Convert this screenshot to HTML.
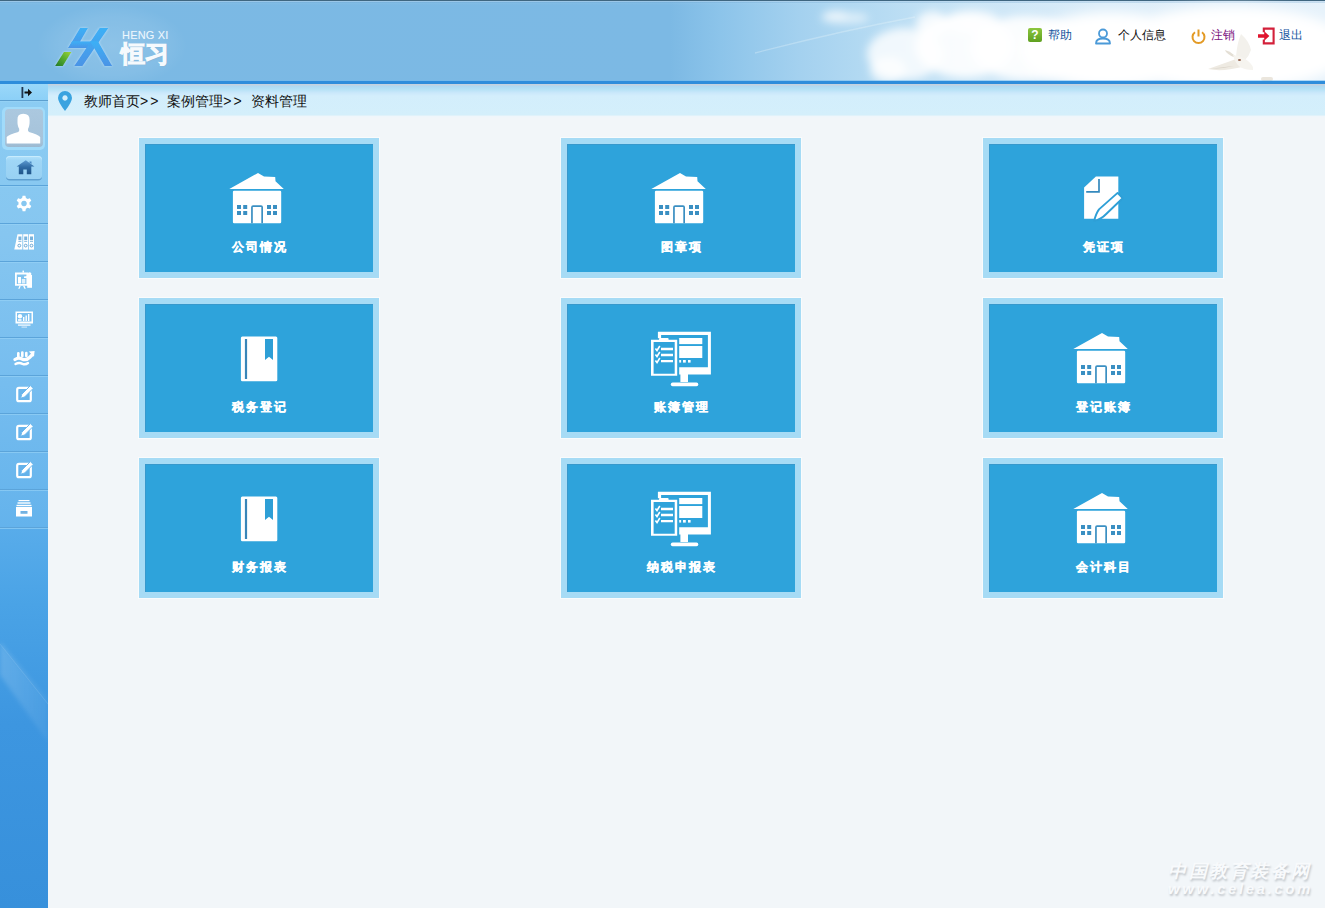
<!DOCTYPE html>
<html><head><meta charset="utf-8">
<style>
*{margin:0;padding:0;box-sizing:border-box}
html,body{width:1325px;height:908px;overflow:hidden;background:#f2f6f9;font-family:"Liberation Sans",sans-serif}
#hdr{position:absolute;left:0;top:0;width:1325px;height:81px;
 background:linear-gradient(90deg,#7bb9e4 0,#7cb9e4 670px,#8cc4ea 720px,#a4d1ef 800px,#b2d9f2 860px,#c8e4f6 960px,#dcedf9 1100px,#e6f2fb 1325px);
 border-top:1px solid #3f6680}
#hdr:before{content:"";position:absolute;left:0;top:0;width:1325px;height:4px;background:linear-gradient(180deg,rgba(180,210,235,.55) 0,rgba(180,210,235,.55) 1px,rgba(120,170,210,.3) 1px,rgba(120,170,210,.3) 2px,rgba(255,255,255,.05) 2px,rgba(255,255,255,0) 4px)}
#hline{position:absolute;left:0;top:81px;width:1325px;height:3px;background:#2e8ddb}
#crumb{position:absolute;left:48px;top:84px;width:1277px;height:34px;
 background:linear-gradient(180deg,#c4d2df 0,#c4d2df 1px,#afd8f1 2px,#b3e1f5 5px,#cbe8fb 9px,#d3eefc 12px,#d4effb 30.5px,#e0f2fa 31.5px,#eff6fb 32.5px,#f2f6f9 34px)}
#crumb .gt{letter-spacing:2px;word-spacing:1px}
#crumb .txt{position:absolute;left:36px;top:9px;font-size:14px;line-height:16px;color:#111;white-space:nowrap}
#side{position:absolute;left:0;top:84px;width:48px;height:824px;
 background:linear-gradient(180deg,#8ccdf3 0,#86c6f0 150px,#76bdef 300px,#64b3ec 443px,#58acea 445px,#4aa3e6 520px,#3d96e0 640px,#3790db 824px)}
.sep{position:absolute;left:0;width:48px;height:1px;background:#5ba4da}
.sep2{position:absolute;left:0;width:48px;height:1px;background:#99d3f6;opacity:.6}
.card{position:absolute;width:240px;height:140px;background:#2ea3db;border:6px solid #a6dbf5;box-shadow:0 0 0 1px rgba(255,255,255,.55),inset 1px 1px 0 #3798cc}
.card .lbl{position:absolute;left:2px;right:0;top:96px;text-align:center;color:#fff;font-weight:bold;font-size:12px;line-height:14px;letter-spacing:2px;-webkit-text-stroke:.35px #fff}
.card svg{position:absolute}
.sico{position:absolute}
#hx{position:absolute;left:122px;top:29px;font:11px/11px "Liberation Sans",sans-serif;color:#eef7fd;letter-spacing:.2px;white-space:nowrap;text-shadow:0 0 1px #9dcbed}
#hxc{position:absolute;left:121px;top:40px;font:bold 24px/26px "Liberation Sans",sans-serif;color:#f6fafd;-webkit-text-stroke:1px #f6fafd;white-space:nowrap;text-shadow:1px 1px 1px #8ab6d6}
.ticon{position:absolute}
#wm1{position:absolute;left:1168px;top:861px;width:144px;font:bold 18px/20px "Liberation Serif",serif;letter-spacing:2.5px;color:#f8fafc;text-shadow:1px 2px 2px #c3c8cd;white-space:nowrap;font-style:italic}
#wm2{position:absolute;left:1168px;top:880px;width:150px;font:bold 15px/17px "Liberation Sans",sans-serif;letter-spacing:2.6px;color:#f8fafc;text-shadow:1px 2px 2px #c3c8cd;white-space:nowrap;font-style:italic}
.tb{position:absolute;top:26px;font-size:12px;line-height:16px;white-space:nowrap}
</style></head><body>
<div id="hdr">
 <svg id="clouds" style="position:absolute;left:0;top:-1px" width="1325" height="81" viewBox="0 0 1325 81">
  <defs><filter id="cb" x="-30%" y="-30%" width="160%" height="160%"><feGaussianBlur stdDeviation="4"/></filter>
  <filter id="cb2" x="-30%" y="-30%" width="160%" height="160%"><feGaussianBlur stdDeviation="6"/></filter></defs>
  <path d="M755,53 Q840,31 915,17" stroke="#eef7fd" stroke-width="1.3" fill="none" opacity=".3"/>
  <g fill="#fff" filter="url(#cb)">
   <ellipse cx="845" cy="18" rx="24" ry="6" opacity=".55"/>
   <ellipse cx="835" cy="15" rx="12" ry="5" opacity=".5"/>
   <ellipse cx="905" cy="54" rx="38" ry="26" opacity=".8"/>
   <ellipse cx="888" cy="70" rx="18" ry="13" opacity=".75"/>
   <ellipse cx="932" cy="24" rx="16" ry="13" opacity=".8"/>
   <ellipse cx="972" cy="22" rx="28" ry="12" opacity=".75"/>
   <ellipse cx="965" cy="46" rx="50" ry="32" opacity=".9"/>
   <ellipse cx="1025" cy="48" rx="55" ry="32" opacity=".9"/>
  </g>
  <g fill="#fff" filter="url(#cb2)">
   <ellipse cx="1110" cy="50" rx="90" ry="38"/>
   <ellipse cx="1230" cy="48" rx="120" ry="42"/>
  </g>
 </svg>
 <svg style="position:absolute;left:0;top:-1px" width="1325" height="81" viewBox="0 0 1325 81">
  <defs><radialGradient id="lglow"><stop offset="0" stop-color="#fff" stop-opacity=".14"/><stop offset=".7" stop-color="#fff" stop-opacity=".07"/><stop offset="1" stop-color="#fff" stop-opacity="0"/></radialGradient>
   <linearGradient id="lg1" x1="0" y1="1" x2="1" y2="0"><stop offset="0" stop-color="#1f7a2a"/><stop offset=".6" stop-color="#5fb22f"/><stop offset="1" stop-color="#9fd23a"/></linearGradient>
   <linearGradient id="lb1" x1="0" y1="0" x2="0" y2="1"><stop offset="0" stop-color="#3db0f6"/><stop offset="1" stop-color="#4a94e6"/></linearGradient>
   <filter id="glow" x="-20%" y="-20%" width="140%" height="140%"><feGaussianBlur stdDeviation="0.8" in="SourceAlpha" result="b"/><feFlood flood-color="#c8ecff" flood-opacity=".8"/><feComposite in2="b" operator="in"/><feMerge><feMergeNode/><feMergeNode in="SourceGraphic"/></feMerge></filter>
  </defs>
  <ellipse cx="112" cy="46" rx="75" ry="42" fill="url(#lglow)"/>
  <g filter="url(#glow)">
   <path d="M55,66 L62.9,66 L71.5,52 L63.8,52 Z" fill="url(#lg1)"/>
   <path d="M80,28 L88,28 L76.5,47.9 L68.2,47.9 Z" fill="url(#lb1)"/>
   <path d="M72,41.3 L96,41.3 L92,47.9 L68.2,47.9 Z" fill="url(#lb1)"/>
   <path d="M99.6,28 L108.4,28 L82.5,66 L74.2,66 Z" fill="url(#lb1)"/>
   <path d="M90,41.3 L98,41.3 L112.2,66 L104.5,66 Z" fill="url(#lb1)"/>
  </g>
  
 </svg>
 <div id="hx">HENG XI</div>
 <div id="hxc">恒习</div>
 <svg id="dove" style="position:absolute;left:1200px;top:28px" width="60" height="56" viewBox="0 0 60 56">
  <defs><filter id="db"><feGaussianBlur stdDeviation=".7"/></filter></defs>
  <g filter="url(#db)">
  <path d="M36,28 Q37,14 41,5 Q49,12 51,21 Q49,27 45,31 Z" fill="#f3f1ec"/>
  <path d="M39,29 Q25,34 8,40 Q22,43 42,38 Z" fill="#eeeae2"/>
  <path d="M25,21 Q30,22 34,26 L37,29 Q31,28 26,23 Z" fill="#e4dfd5"/>
  <path d="M33,26 Q42,27 48,32 Q54,37 53,41 Q45,41 40,38 Q35,34 33,26 Z" fill="#f6f4ef"/>
  <path d="M10,40 Q22,40 34,37 Q24,38 10,40 Z" fill="#d9d3c8"/>
  <ellipse cx="39.5" cy="31" rx="1.6" ry="1" fill="#9a6a55"/>
  </g>
 </svg>
 <div style="position:absolute;left:1261px;top:76px;width:12px;height:4px;background:#ebe6dd;border-radius:2px"></div>
 <div class="ticon" style="left:1028px;top:27px;width:14px;height:14px;background:linear-gradient(#8cc63f,#5fa020);border-radius:2px;color:#fff;font:bold 12px/14px 'Liberation Sans',sans-serif;text-align:center">?</div>
 <div class="tb" style="left:1048px;color:#14549e">帮助</div>
 <svg class="ticon" style="left:1094px;top:27px" width="18" height="17" viewBox="0 0 18 17"><circle cx="9" cy="5.5" r="4" fill="none" stroke="#4b9ad8" stroke-width="1.8"/><path d="M2,15.5 Q2,10.5 9,10.5 Q16,10.5 16,15.5 Z" fill="none" stroke="#4b9ad8" stroke-width="1.8" stroke-linejoin="round"/></svg>
 <div class="tb" style="left:1118px;color:#111">个人信息</div>
 <svg class="ticon" style="left:1190px;top:27px" width="17" height="17" viewBox="0 0 17 17"><path d="M5,4.2 A6,6 0 1 0 12,4.2" fill="none" stroke="#e39a24" stroke-width="2"/><path d="M8.5,1.5 V8.5" stroke="#e39a24" stroke-width="2"/></svg>
 <div class="tb" style="left:1211px;color:#7c1380">注销</div>
 <svg class="ticon" style="left:1257px;top:26px" width="18" height="18" viewBox="0 0 18 18"><path d="M6.8,5.2 V1.6 H16.6 V16.4 H6.8 V12.6" fill="none" stroke="#d3203a" stroke-width="2.1"/><path d="M1,7.3 H7.2 V4.2 L12.4,9 L7.2,13.8 V10.7 H1 Z" fill="#e0142e"/></svg>
 <div class="tb" style="left:1279px;color:#14549e">退出</div>
</div>
<div id="hline"></div><div style="position:absolute;left:0;top:80px;width:1325px;height:1px;background:rgba(110,185,240,.5)"></div>
<div id="side"></div>
<div style="position:absolute;left:0;top:84px;width:48px;height:16px;background:linear-gradient(#9ad8f9,#8cd0f7)"></div>
<div class="sep" style="top:100px;background:#5b9fcf"></div><div class="sep2" style="top:101px"></div>
<svg class="sico" style="left:20px;top:86px" width="14" height="13" viewBox="0 0 14 13"><rect x="1.5" y="1" width="1.8" height="11" fill="#1d3550"/><path d="M4.5,5.4 H8 V2.8 L12,6.5 L8,10.2 V7.6 H4.5 Z" fill="#111"/></svg>
<div style="position:absolute;left:2px;top:107px;width:43px;height:43px;border-radius:5px;background:#a1dbfa"></div>
<div style="position:absolute;left:4.5px;top:109px;width:38px;height:38px;border-radius:4px;background:linear-gradient(#abc8df,#a6c3da 85%,#9cb9d0)"></div>
<svg class="sico" style="left:0;top:100px" width="48" height="50" viewBox="0 0 48 50"><path d="M17.5,20 Q17,13.8 23.3,13.8 Q29.8,13.8 29.6,20 Q29.8,26 28,29 Q27.6,31 29,32 Q38,34.5 40.2,37 V43.6 H6.7 V37 Q9,34.5 18.3,32 Q19.6,31 19.2,29 Q17.2,26 17.5,20 Z" fill="#fff"/></svg>
<div style="position:absolute;left:5.5px;top:155.5px;width:36.5px;height:23px;border-radius:4px;background:linear-gradient(#b4e2fb,#9fd6f6 20%,#98d1f3);box-shadow:0 1.5px 0 #5e9fd0, inset 0 1px 0 #c8ecfd"></div>
<svg class="sico" style="left:0;top:150px" width="48" height="30" viewBox="0 0 48 30"><defs><linearGradient id="hg" x1="0" y1="0" x2="0" y2="1"><stop offset="0" stop-color="#5d9ad0"/><stop offset=".5" stop-color="#2f6ba4"/><stop offset="1" stop-color="#1f5488"/></linearGradient></defs><path d="M25.8,10.3 L34.4,16.5 H31.3 V24.2 H26.8 V19.5 H23.3 V24.2 H18.8 V16.5 H16.6 Z" fill="url(#hg)"/><path d="M29.5,11.5 H31.5 V14 L29.5,12.7 Z" fill="#4d8ac4"/></svg>
<div class="sep" style="top:185px"></div><div class="sep2" style="top:186px"></div><div class="sep" style="top:223px"></div><div class="sep2" style="top:224px"></div><div class="sep" style="top:261px"></div><div class="sep2" style="top:262px"></div><div class="sep" style="top:299px"></div><div class="sep2" style="top:300px"></div><div class="sep" style="top:337px"></div><div class="sep2" style="top:338px"></div><div class="sep" style="top:375px"></div><div class="sep2" style="top:376px"></div><div class="sep" style="top:413px"></div><div class="sep2" style="top:414px"></div><div class="sep" style="top:451px"></div><div class="sep2" style="top:452px"></div><div class="sep" style="top:489px"></div><div class="sep2" style="top:490px"></div><div class="sep" style="top:527px"></div><div class="sep2" style="top:528px"></div>
<!-- sidebar icons -->
<svg class="sico" style="left:15px;top:195px" width="18" height="18" viewBox="0 0 18 18"><path fill="#fff" fill-rule="evenodd" d="M7.6,0.8 H10.4 L10.9,3.1 L12.7,4.1 L14.9,3.3 L16.3,5.7 L14.5,7.3 V9.5 L16.3,11.1 L14.9,13.5 L12.7,12.7 L10.9,13.8 L10.4,16.2 H7.6 L7.1,13.8 L5.3,12.7 L3.1,13.5 L1.7,11.1 L3.5,9.5 V7.3 L1.7,5.7 L3.1,3.3 L5.3,4.1 L7.1,3.1 Z M9,5.7 A2.8,2.8 0 1 0 9.01,5.7 Z"/></svg>
<svg class="sico" style="left:14px;top:233px" width="21" height="18" viewBox="0 0 21 18"><g fill="#fff"><path d="M3.5,1.2 H8.3 V16.6 H0.3 Z"/><rect x="9.2" y="1.2" width="5" height="15.4"/><rect x="15" y="1.2" width="5" height="15.4"/></g><g fill="#7ab3dc"><rect x="4.4" y="3.5" width="3" height="3.5"/><rect x="10.2" y="3.5" width="3" height="3.5"/><rect x="16" y="3.5" width="3" height="3.5"/><rect x="4.4" y="7.8" width="3" height="1"/><rect x="10.2" y="7.8" width="3" height="1"/><rect x="16" y="7.8" width="3" height="1"/></g><g fill="none" stroke="#6aa6d4" stroke-width="1"><circle cx="5.3" cy="12.6" r="1.4"/><circle cx="11.7" cy="12.6" r="1.4"/><circle cx="17.5" cy="12.6" r="1.4"/></g></svg>
<svg class="sico" style="left:14px;top:270px" width="20" height="20" viewBox="0 0 20 20"><g fill="#fff"><rect x="8.5" y="0.6" width="1.5" height="2"/><path fill-rule="evenodd" d="M1,2.6 H14.2 V15.8 H1 Z M2.8,4.4 V14 H12.4 V4.4 Z"/><rect x="4" y="7" width="3" height="6.5"/><rect x="7.8" y="9" width="3.5" height="4.5" opacity=".75"/><rect x="13.2" y="5" width="4.8" height="12.8"/><circle cx="15.6" cy="4" r="1.8"/><path d="M10,6.5 L13.5,6 V8 L10,8 Z"/><path d="M5.5,15.8 L4.2,18.8 H5.6 L6.8,15.8 Z M9,15.8 L10.4,18.8 H11.8 L10.5,15.8 Z"/></g></svg>
<svg class="sico" style="left:15px;top:310px" width="19" height="18" viewBox="0 0 19 18"><g fill="#fff"><path fill-rule="evenodd" d="M0.5,1.5 H18 V13.5 H0.5 Z M2,3 V11.5 H16.5 V3 Z"/><rect x="3" y="14.5" width="12.5" height="1.2"/><rect x="6.5" y="16.5" width="5.5" height="1.2" opacity=".6"/><circle cx="5" cy="6.2" r="2.2"/><rect x="8" y="7" width="1.4" height="4"/><rect x="10.5" y="5.5" width="1.4" height="5.5"/><rect x="13" y="4" width="1.4" height="7"/><rect x="3" y="9" width="3.5" height="2" opacity=".8"/></g></svg>
<svg class="sico" style="left:13px;top:349px" width="23" height="18" viewBox="0 0 23 18"><g fill="#fff"><rect x="4" y="3" width="2.6" height="5.5" rx="1.2"/><rect x="8" y="2.2" width="2.6" height="6" rx="1.2"/><rect x="12" y="2.8" width="2.6" height="5.5" rx="1.2"/><path d="M15.8,2.6 L21.6,2 L21,7.8 Z"/></g><g fill="none" stroke="#fff" stroke-linecap="round"><path d="M2,10.5 Q5.5,8 9,10 Q13,12 16.5,8.5 L19,6" stroke-width="3.2"/><path d="M2.5,15 Q6,13.2 9.5,14.8 Q12.5,16 15,14" stroke-width="2.4"/></g></svg>
<svg class="sico" style="left:15px;top:385px" width="19" height="18" viewBox="0 0 19 18"><rect x="2.2" y="2.8" width="13.6" height="13.4" rx="1.8" fill="#5aa9e6" fill-opacity=".35" stroke="#fff" stroke-width="2.2"/><path d="M15.4,0.6 L18.2,3.4 L9.6,12 L5.6,13.2 L6.8,9.2 Z" fill="#fff" stroke="#6cb8ee" stroke-width="1"/></svg>
<svg class="sico" style="left:15px;top:423px" width="19" height="18" viewBox="0 0 19 18"><rect x="2.2" y="2.8" width="13.6" height="13.4" rx="1.8" fill="#5aa9e6" fill-opacity=".35" stroke="#fff" stroke-width="2.2"/><path d="M15.4,0.6 L18.2,3.4 L9.6,12 L5.6,13.2 L6.8,9.2 Z" fill="#fff" stroke="#6cb8ee" stroke-width="1"/></svg>
<svg class="sico" style="left:15px;top:461px" width="19" height="18" viewBox="0 0 19 18"><rect x="2.2" y="2.8" width="13.6" height="13.4" rx="1.8" fill="#5aa9e6" fill-opacity=".35" stroke="#fff" stroke-width="2.2"/><path d="M15.4,0.6 L18.2,3.4 L9.6,12 L5.6,13.2 L6.8,9.2 Z" fill="#fff" stroke="#6cb8ee" stroke-width="1"/></svg>
<svg class="sico" style="left:15px;top:499px" width="18" height="19" viewBox="0 0 18 19"><g fill="#fff"><rect x="3.5" y="1" width="11" height="1.2"/><rect x="2.5" y="3.3" width="13" height="1.4"/><rect x="1.5" y="5.8" width="15" height="1.4"/><path fill-rule="evenodd" d="M1,8 H17 V17.5 H1 Z M5.5,12 V14.8 H12.5 V12 Z"/></g><rect x="6.3" y="12.7" width="5.4" height="1.4" fill="#7fb0d6"/></svg>

<div id="crumb"><svg style="position:absolute;left:9px;top:6px" width="16" height="22" viewBox="0 0 16 22"><path fill="#3aa3e0" fill-rule="evenodd" d="M8,1 A7,7 0 0 1 15,8 Q15,12 8,21 Q1,12 1,8 A7,7 0 0 1 8,1 Z M8,5.3 A2.7,2.7 0 1 0 8.01,5.3 Z"/></svg><div class="txt">教师首页<span class="gt">&gt;&gt; </span>案例管理<span class="gt">&gt;&gt; </span>资料管理</div></div>

<!-- cards -->
<div class="card" style="left:139px;top:138px">
 <svg style="left:79px;top:24px" width="68" height="60" viewBox="0 0 68 60"><use href="#house"/></svg>
 <div class="lbl">公司情况</div></div>
<div class="card" style="left:561px;top:138px">
 <svg style="left:79px;top:24px" width="68" height="60" viewBox="0 0 68 60"><use href="#house"/></svg>
 <div class="lbl">图章项</div></div>
<div class="card" style="left:983px;top:138px">
 <svg style="left:86px;top:26px" width="55" height="55" viewBox="0 0 55 55"><use href="#doc"/></svg>
 <div class="lbl">凭证项</div></div>
<div class="card" style="left:139px;top:298px">
 <svg style="left:85px;top:26px" width="60" height="60" viewBox="0 0 60 60"><use href="#book"/></svg>
 <div class="lbl">税务登记</div></div>
<div class="card" style="left:561px;top:298px">
 <svg style="left:78px;top:21px" width="75" height="65" viewBox="0 0 75 65"><use href="#mon"/></svg>
 <div class="lbl">账簿管理</div></div>
<div class="card" style="left:983px;top:298px">
 <svg style="left:79px;top:24px" width="68" height="60" viewBox="0 0 68 60"><use href="#house"/></svg>
 <div class="lbl">登记账簿</div></div>
<div class="card" style="left:139px;top:458px">
 <svg style="left:85px;top:26px" width="60" height="60" viewBox="0 0 60 60"><use href="#book"/></svg>
 <div class="lbl">财务报表</div></div>
<div class="card" style="left:561px;top:458px">
 <svg style="left:78px;top:21px" width="75" height="65" viewBox="0 0 75 65"><use href="#mon"/></svg>
 <div class="lbl">纳税申报表</div></div>
<div class="card" style="left:983px;top:458px">
 <svg style="left:79px;top:24px" width="68" height="60" viewBox="0 0 68 60"><use href="#house"/></svg>
 <div class="lbl">会计科目</div></div>

<svg width="0" height="0" style="position:absolute">
 <defs>
  <g id="house">
   <path d="M5.3,21 L34,5 L40,8.6 L51.2,9 L51.5,13.2 L59.8,21 Z" fill="#fff"/>
   <rect x="8.9" y="22.8" width="48.3" height="32.4" rx="1.2" fill="#fff"/>
   <g fill="#3a8fc2">
    <rect x="13" y="37" width="4" height="4"/><rect x="19.2" y="37" width="4" height="4"/>
    <rect x="13" y="43" width="4" height="4"/><rect x="19.2" y="43" width="4" height="4"/>
    <rect x="43" y="37" width="4" height="4"/><rect x="49" y="37" width="4" height="4"/>
    <rect x="43" y="43" width="4" height="4"/><rect x="49" y="43" width="4" height="4"/>
    <path d="M27.1,55.2 V39.3 a2,2 0 0 1 2,-2 H37 a2,2 0 0 1 2,2 V55.2 H37.3 V39 H28.8 V55.2 Z"/>
   </g>
  </g>
  <g id="book">
   <rect x="10.9" y="6.6" width="36.4" height="44.6" rx="1.5" fill="#fff"/>
   <rect x="14.9" y="9" width="2.2" height="40" fill="#3a86b8"/>
   <path d="M35,9 H43 V30 L39,26.8 L35,30 Z" fill="#2e9fd6"/>
  </g>
  <g id="doc">
   <path d="M20.9,6.4 H43.3 V48.8 H9.1 V17.6 Z" fill="#fff"/>
   <path d="M24,9 V21.8 H11.2" fill="none" stroke="#3589bd" stroke-width="1.7"/>
   <path d="M42.6,22.9 L47.6,28.2 L31.2,44 Q26,49.5 19.2,50.8 Q21,43.5 24,39.4 Z" fill="#fff" stroke="#2e9fd6" stroke-width="1.9" stroke-linejoin="round"/>
  </g>
  <g id="mon">
   <path fill="#fff" fill-rule="evenodd" d="M12.9,6.8 H65.9 V49.4 H12.9 Z M16.1,10 V42.2 H62.9 V10 Z"/>
   <rect x="33.6" y="13" width="23.7" height="6.1" fill="#fff"/>
   <rect x="33.6" y="21" width="23.7" height="12" fill="#fff"/>
   <rect x="33.6" y="35" width="2.5" height="2.6" fill="#fff"/><rect x="38" y="35" width="2.8" height="2.6" fill="#fff"/><rect x="43" y="35" width="2.6" height="2.6" fill="#fff"/>
   <rect x="35.4" y="49" width="7.6" height="8" fill="#fff"/>
   <rect x="25.8" y="57.6" width="27.5" height="3.6" rx="1.8" fill="#fff"/>
   <rect x="4.6" y="13.2" width="29.6" height="38.6" fill="#2ea3db"/>
   <path fill="#fff" fill-rule="evenodd" d="M6,14.7 H32.2 V50.8 H6 Z M8.6,17 V48.7 H29.7 V17 Z"/>
   <rect x="14" y="13" width="9.6" height="2.4" rx="1" fill="#fff"/>
   <g fill="none" stroke="#fff" stroke-width="2.4">
    <path d="M16,24 H28 M16,30 H28 M16,36.1 H28"/>
   </g>
   <g fill="none" stroke="#fff" stroke-width="1.6">
    <path d="M10.4,23.5 L12,25.5 L14.8,21 M10.4,29.5 L12,31.5 L14.8,27 M10.4,35.6 L12,37.6 L14.8,33"/>
   </g>
  </g>
 </defs>
</svg>
<div id="wm1">中国教育装备网</div><div id="wm2">www.celea.com</div>
<svg style="position:absolute;left:0;top:600px" width="48" height="160" viewBox="0 0 48 160"><defs><filter id="sb"><feGaussianBlur stdDeviation="2"/></filter><linearGradient id="sg" x1="0" y1="0" x2="1" y2="0"><stop offset="0" stop-color="#fff" stop-opacity=".16"/><stop offset="1" stop-color="#fff" stop-opacity=".05"/></linearGradient></defs><path d="M0,42 L48,100 L48,142 L0,75 Z" fill="url(#sg)" filter="url(#sb)"/><path d="M0,44 L48,104" stroke="#fff" stroke-width="1" opacity=".1"/></svg>
</body></html>
